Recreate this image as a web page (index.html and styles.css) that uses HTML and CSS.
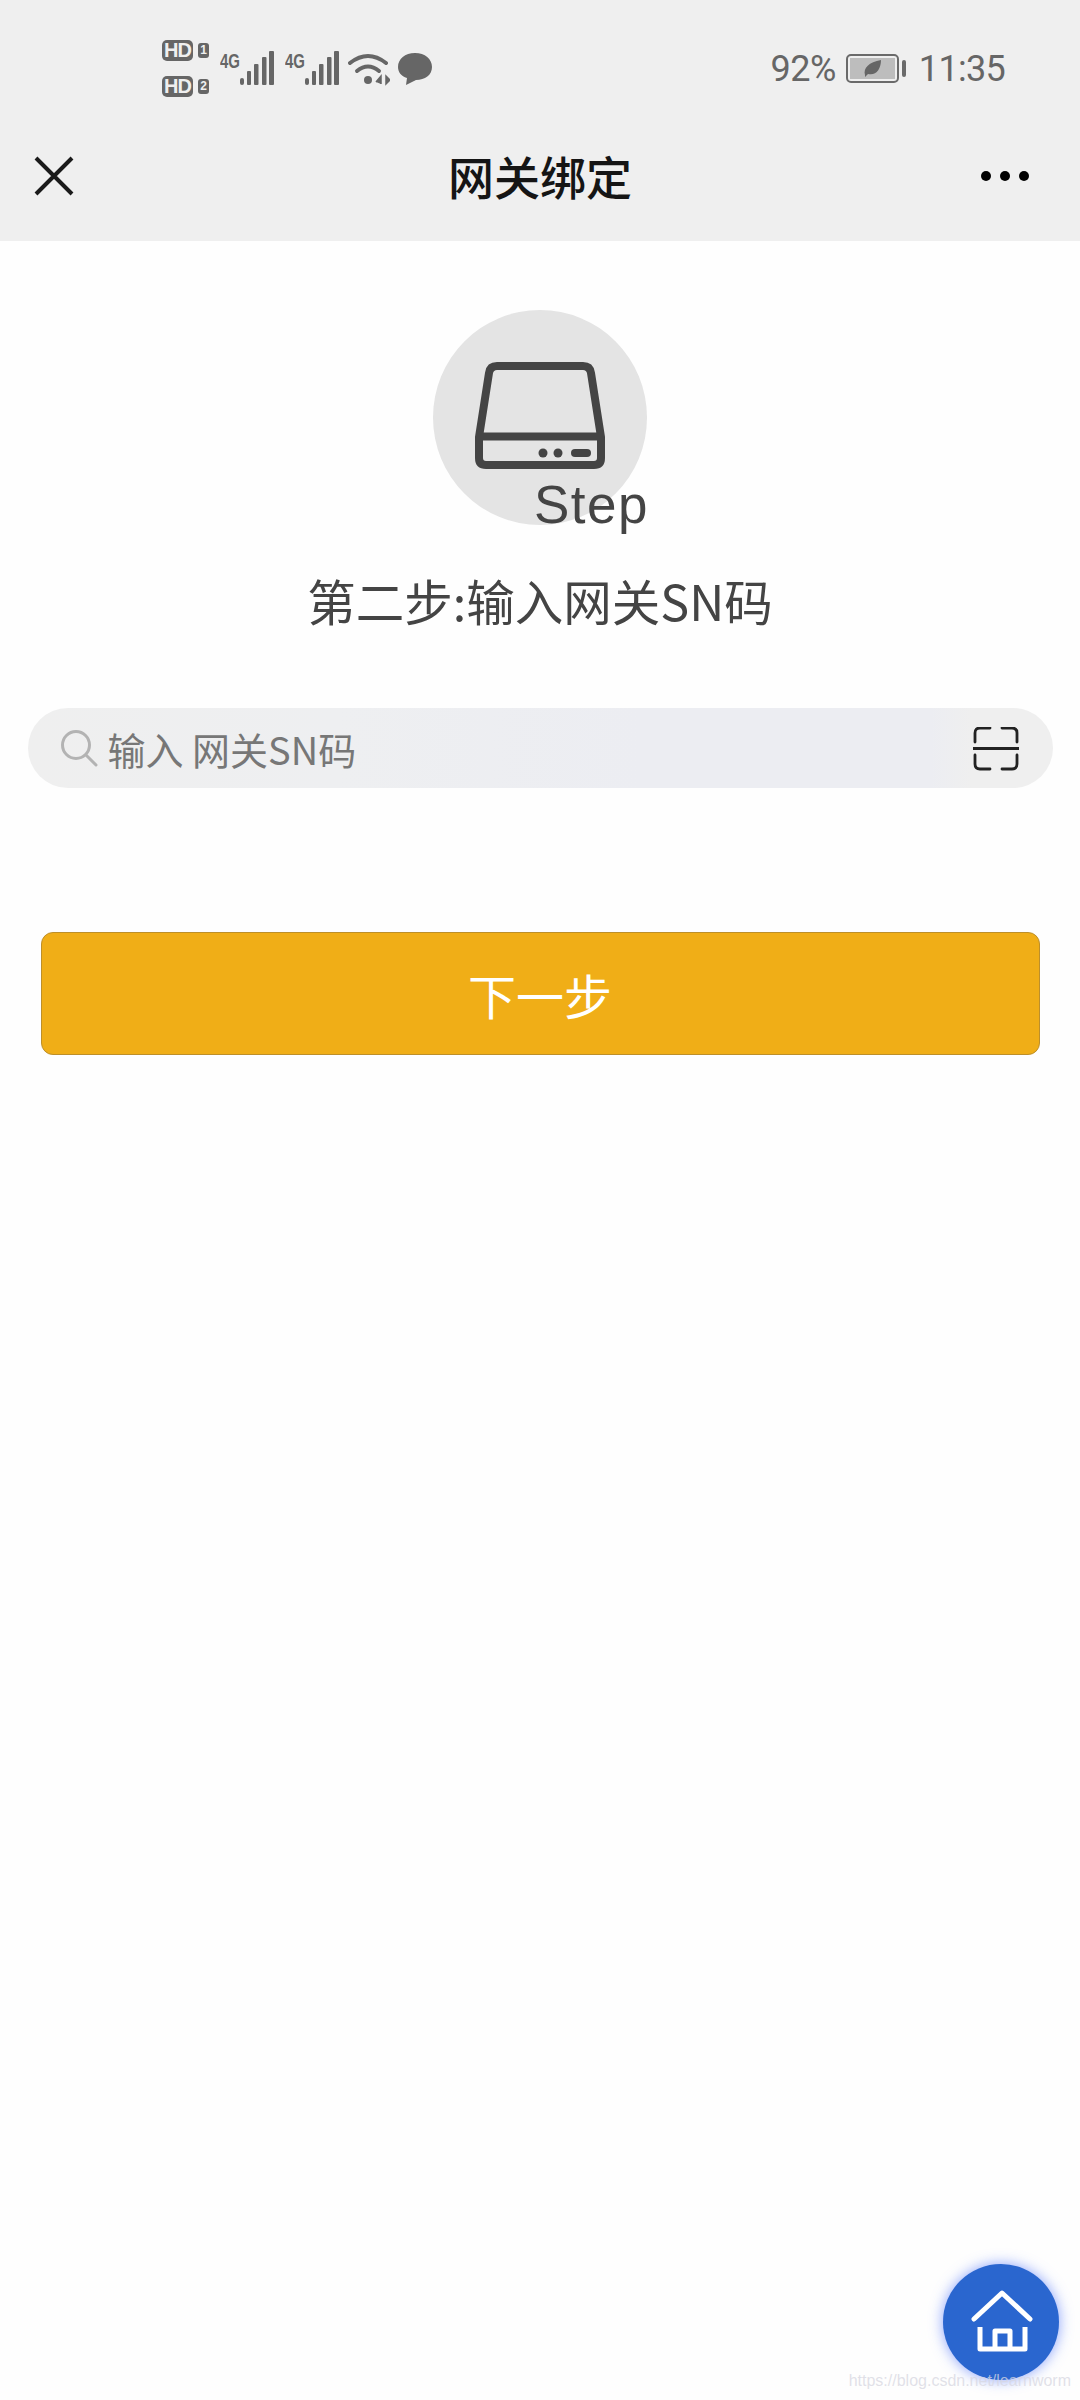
FILE: index.html
```html
<!DOCTYPE html>
<html lang="zh-CN">
<head>
  <meta charset="UTF-8">
  <meta name="viewport" content="width=device-width, initial-scale=1.0">
  <title>网关绑定</title>
  <link rel="stylesheet" href="styles.css">
</head>
<body>
  <div class="page">
    <header class="topbar">
      <div class="status">
        <div class="sims">
          <div class="sim"><span class="hd">HD</span><span class="slot">1</span></div>
          <div class="sim"><span class="hd">HD</span><span class="slot">2</span></div>
        </div>
        <svg class="signal" viewBox="0 0 55 36">
          <text class="net" x="0" y="17" textLength="20" lengthAdjust="spacingAndGlyphs">4G</text>
          <g fill="#666">
            <rect x="20" y="27" width="4" height="7" rx="2"/>
            <rect x="27" y="20" width="4" height="14" rx="1"/>
            <rect x="34" y="13" width="4.500" height="21" rx="1"/>
            <rect x="42" y="6" width="4.500" height="28" rx="1"/>
            <rect x="49" y="0" width="5" height="34" rx="1"/>
          </g>
        </svg>
        <svg class="signal" viewBox="0 0 55 36">
          <text class="net" x="0" y="17" textLength="20" lengthAdjust="spacingAndGlyphs">4G</text>
          <g fill="#666">
            <rect x="20" y="27" width="4" height="7" rx="2"/>
            <rect x="27" y="20" width="4" height="14" rx="1"/>
            <rect x="34" y="13" width="4.500" height="21" rx="1"/>
            <rect x="42" y="6" width="4.500" height="28" rx="1"/>
            <rect x="49" y="0" width="5" height="34" rx="1"/>
          </g>
        </svg>
        <svg class="wifi" viewBox="0 0 42 34">
          <path d="M2 11 Q20 -3 38 11" fill="none" stroke="#666" stroke-width="4" stroke-linecap="round"/>
          <path d="M9 19 Q20 10 31 19" fill="none" stroke="#666" stroke-width="4" stroke-linecap="round"/>
          <circle cx="20" cy="28" r="4" fill="#666"/>
          <path d="M28 30 L33 24 V32 M38 24 L42 28 L38 32 Z" fill="#666" stroke="#666" stroke-width="1.500"/>
        </svg>
        <svg class="bubble" viewBox="0 0 34 32">
          <path d="M17 0 C27 0 34 6 34 14 C34 22 27 27 18 27 L8 32 L9 25 C3 23 0 19 0 14 C0 6 7 0 17 0 Z" fill="#666"/>
        </svg>
        <div class="status-right">
          <span class="percent">92%</span>
          <svg class="battery" viewBox="0 0 60 30">
            <rect x="1" y="1" width="51" height="27" rx="4" fill="none" stroke="#6a6a6a" stroke-width="2"/>
            <rect x="4" y="4" width="45" height="21" fill="#bdbdbd"/>
            <path d="M19 21 C17 14 23 8 35 6 C35 15 30 22 22 20 L19 23 Z" fill="#666"/>
            <rect x="56" y="6" width="4" height="17" rx="2" fill="#6a6a6a"/>
          </svg>
          <span class="clock">11:35</span>
        </div>
      </div>
      <nav class="nav">
        <svg class="close" viewBox="0 0 40 40">
          <path d="M2 2 L38 38 M38 2 L2 38" stroke="#1a1a1a" stroke-width="4" fill="none"/>
        </svg>
        <h1 class="title">网关绑定</h1>
        <div class="more"><i></i><i></i><i></i></div>
      </nav>
    </header>

    <main class="main">
      <div class="step-badge">
        <svg class="drive" viewBox="0 0 130 107">
          <path d="M4 75 L14 11 Q15 4 22 4 H108 Q115 4 116 11 L126 75 V96 Q126 103 119 103 H11 Q4 103 4 96 Z M4 74.500 H126" fill="none" stroke="#444" stroke-width="8" stroke-linejoin="round"/>
          <circle cx="68" cy="91" r="4.500" fill="#444"/>
          <circle cx="83" cy="91" r="4.500" fill="#444"/>
          <rect x="96" y="87" width="20" height="8" rx="4" fill="#444"/>
        </svg>
        <span class="step-word">Step</span>
      </div>
      <h2 class="step-title">第二步:输入网关SN码</h2>

      <div class="search">
        <svg class="search-icon" viewBox="0 0 38 38">
          <circle cx="16" cy="16" r="13.500" fill="none" stroke="#b3b3b3" stroke-width="3"/>
          <path d="M26 26 L36 36" stroke="#b3b3b3" stroke-width="3" stroke-linecap="round"/>
        </svg>
        <span class="search-text">输入 网关SN码</span>
        <svg class="scan" viewBox="0 0 46 44">
          <path d="M2 15 V6 Q2 1 7 1 H17 M29 1 H39 Q44 1 44 6 V15 M2 28 V37 Q2 42 7 42 H17 M29 42 H39 Q44 42 44 37 V28" fill="none" stroke="#222" stroke-width="2.800" stroke-linecap="round"/>
          <path d="M0 21.500 H46" stroke="#222" stroke-width="2.800"/>
        </svg>
      </div>

      <button class="next">下一步</button>
    </main>

    <a class="home">
      <svg viewBox="0 0 116 116">
        <path d="M31 55 L59 29 L87 55" fill="none" stroke="#fff" stroke-width="5" stroke-linecap="round" stroke-linejoin="round"/>
        <path d="M37 63 V85 H82 V63 M52 85 V67 H67 V85" fill="none" stroke="#fff" stroke-width="5" stroke-linejoin="round"/>
      </svg>
    </a>
    <span class="watermark">https://blog.csdn.net/learnworm</span>
  </div>
</body>
</html>
```

FILE: styles.css
```css
* {
  box-sizing: border-box;
}
body {
  margin: 0;
  background-color: #fff;
  font-family: "Noto Sans CJK SC", "Noto Sans", sans-serif;
}
.page {
  position: relative;
  width: 1080px;
  height: 2400px;
  overflow: hidden;
  background-color: #fefefe;
}

/* top grey area */
.topbar {
  height: 241px;
  padding-top: 40px;
  background-color: #efefef;
}
.status {
  display: flex;
  align-items: center;
  height: 57px;
  padding: 0 75px 0 162px;
}
.sims {
  display: flex;
  flex-direction: column;
  gap: 15px;
  width: 58px;
}
.sim {
  display: flex;
  align-items: center;
  gap: 5px;
  height: 21px;
}
.hd {
  width: 31px;
  height: 21px;
  border-radius: 5px;
  background-color: #666;
  color: #efefef;
  font: bold 20px/21px "Liberation Sans", sans-serif;
  letter-spacing: -1px;
  text-align: center;
}
.slot {
  width: 11px;
  height: 15px;
  border-radius: 3px;
  background-color: #666;
  color: #efefef;
  font: bold 12px/15px "Liberation Sans", sans-serif;
  text-align: center;
}
.signal {
  width: 55px;
  height: 36px;
  margin-right: 10px;
}
.net {
  font: bold 20px "Liberation Sans", sans-serif;
  fill: #666;
}
.wifi {
  width: 42px;
  height: 34px;
  margin-left: -2px;
  margin-right: 8px;
}
.bubble {
  width: 34px;
  height: 32px;
}
.status-right {
  display: flex;
  align-items: center;
  margin-left: auto;
  color: #666;
  font-family: Roboto, sans-serif;
  font-size: 36px;
}
.percent {
  letter-spacing: -0.5px;
}
.clock {
  letter-spacing: -0.7px;
}
.battery {
  width: 60px;
  height: 30px;
  margin: 0 13px 0 10px;
}

.nav {
  display: grid;
  grid-template-columns: 1fr auto 1fr;
  align-items: center;
  height: 72px;
  margin-top: 43px;
  padding: 0 51px;
}
.close {
  width: 40px;
  height: 40px;
  margin-left: -17px;
}
.title {
  margin: 0 0 3px;
  color: #151515;
  font-size: 46px;
  font-weight: 500;
  line-height: 66px;
}
.more {
  display: flex;
  justify-content: flex-end;
  gap: 9px;
}
.more i {
  width: 10px;
  height: 10px;
  border-radius: 50%;
  background-color: #000;
}

/* content */
.main {
  display: flex;
  flex-direction: column;
  align-items: center;
  padding-top: 69px;
}
.step-badge {
  position: relative;
  display: flex;
  justify-content: center;
  align-items: flex-start;
  width: 214px;
  height: 215px;
  padding-top: 52px;
  border-radius: 50%;
  background-color: #e4e4e4;
}
.drive {
  width: 130px;
  height: 107px;
}
.step-word {
  position: absolute;
  left: 101px;
  top: 165px;
  color: #444;
  font: 53px/60px "Liberation Sans", sans-serif;
  letter-spacing: 1.5px;
}
.step-title {
  margin: 45px 0 1px;
  color: #444;
  font-size: 48.5px;
  font-weight: 400;
  line-height: 60px;
}
.search {
  display: flex;
  align-items: center;
  width: 1025px;
  height: 80px;
  margin-top: 77px;
  padding: 0 34px 0 32px;
  border-radius: 40px;
  background: linear-gradient(90deg, #efefef 0, #eeeff1 30%, #ecedf2 60%, #ecedf2 88%, #efefef 92%);
}
.search-icon {
  width: 38px;
  height: 38px;
  margin-right: 10px;
}
.search-text {
  color: #777;
  font-size: 38px;
}
.scan {
  width: 46px;
  height: 44px;
  margin-top: 2px;
  margin-left: auto;
}
.next {
  display: block;
  width: 999px;
  height: 123px;
  margin-top: 144px;
  border: 1px solid #bd8f2a;
  border-radius: 12px;
  background-color: #f0ae17;
  color: #fff;
  font-family: inherit;
  font-size: 48px;
  font-weight: 400;
}

/* floating home button */
.home {
  position: absolute;
  right: 21px;
  bottom: 20px;
  width: 116px;
  height: 116px;
  border-radius: 50%;
  background-color: #2a66cf;
  box-shadow: 0 0 14px rgba(60, 100, 250, 0.6);
}
.home svg {
  display: block;
  width: 116px;
  height: 116px;
}
.watermark {
  position: absolute;
  right: 9px;
  bottom: 7px;
  color: rgba(215, 215, 225, 0.75);
  font: 16px/24px "Liberation Sans", sans-serif;
}
```
